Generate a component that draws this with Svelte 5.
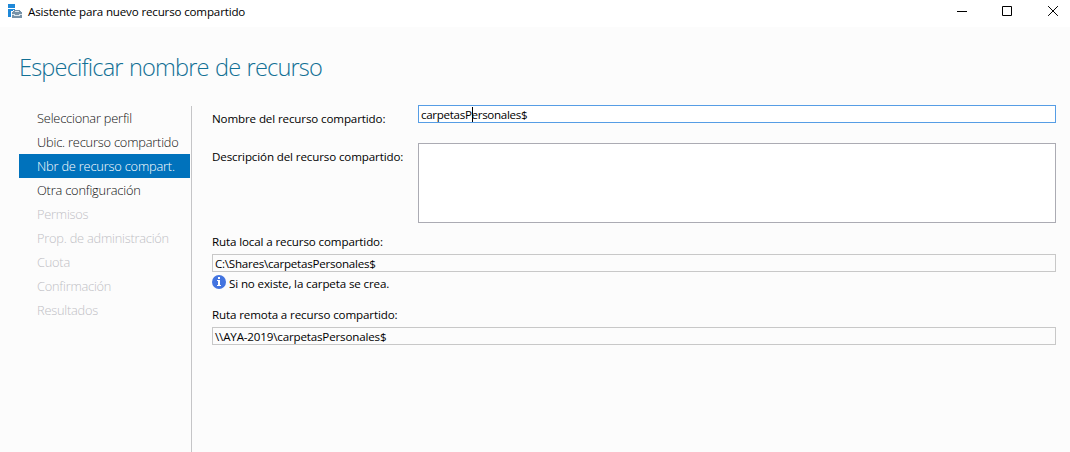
<script>
  const steps = [
    { text: 'Seleccionar perfil', state: '' },
    { text: 'Ubic. recurso compartido', state: '' },
    { text: 'Nbr de recurso compart.', state: 'active' },
    { text: 'Otra configuración', state: '' },
    { text: 'Permisos', state: 'disabled' },
    { text: 'Prop. de administración', state: 'disabled' },
    { text: 'Cuota', state: 'disabled' },
    { text: 'Confirmación', state: 'disabled' },
    { text: 'Resultados', state: 'disabled' }
  ];
</script>

<div class="window">
  <header class="titlebar">
    <svg class="app-icon" width="14" height="14" viewBox="0 0 14 14" shape-rendering="crispEdges">
      <path d="M0 0h7v4H0z M0 5h7v1H5v1H3v6H0z" fill="#1e88d8" />
      <path d="M6 6h6v1h1v1h1v6H4V8h1V7h1z" fill="#7893a8" />
      <path d="M7 7h4v1H7z M4 10h3v1h4v-1h3v1h-2v1H6v-1H4z" fill="#dce6ec" />
    </svg>
    <span class="title">Asistente para nuevo recurso compartido</span>
    <div class="controls">
      <svg width="10" height="11" viewBox="0 0 10 11"><path d="M0 5.5h10" stroke="#000" /></svg>
      <svg width="10" height="11" viewBox="0 0 10 11"><path d="M.5 .5h9v9h-9z" fill="none" stroke="#000" /></svg>
      <svg width="10" height="11" viewBox="0 0 10 11"><path d="M.1 .1l9.8 9.8M9.9 .1L.1 9.9" stroke="#000" /></svg>
    </div>
  </header>

  <h1>Especificar nombre de recurso</h1>

  <div class="content">
    <nav>
      {#each steps as step}
        <div class="step {step.state}">{step.text}</div>
      {/each}
    </nav>
    <main>
      <div class="row name-row">
        <span class="label">Nombre del recurso compartido:</span>
        <div class="field focused"><span>carpetasP</span><i class="caret"></i><span>ersonales$</span></div>
      </div>
      <div class="row desc-row">
        <span class="label">Descripción del recurso compartido:</span>
        <div class="field area"></div>
      </div>
      <div class="label above">Ruta local a recurso compartido:</div>
      <div class="field local-path">C:\Shares\carpetasPersonales$</div>
      <div class="info">
        <svg width="14" height="14" viewBox="0 0 14 14">
          <circle cx="7" cy="7" r="7" fill="#4374e0" />
          <path d="M6 2h2v2H6z M5 5h3v5h1v1H5v-1h1V6H5z" fill="#fff" />
        </svg>
        <span>Si no existe, la carpeta se crea.</span>
      </div>
      <div class="label above">Ruta remota a recurso compartido:</div>
      <div class="field remote-path">\\AYA-2019\carpetasPersonales$</div>
    </main>
  </div>
</div>

<style>
  :global(body) { margin: 0; background: #fcfcfc; }
  .window {
    width: 1070px; height: 452px; overflow: hidden; background: #fcfcfc;
    display: flex; flex-direction: column;
    font: 11.6px/16px "Open Sans", "Noto Sans", sans-serif;
    color: #000; white-space: nowrap;
  }
  .titlebar {
    box-sizing: border-box; height: 27px; flex: none; background: #fff;
    display: flex; align-items: flex-start; padding: 4px 12px 0 8px;
  }
  .app-icon { flex: none; }
  .title { margin-left: 6px; letter-spacing: -0.17px; }
  .controls { margin-left: auto; display: flex; gap: 35.5px; padding-top: 2px; }
  .controls svg { display: block; }
  .controls svg:first-child { margin-right: -0.5px; }
  .controls svg:nth-child(2) { margin-right: 0.5px; }
  h1 {
    margin: 22px 0 0 19px; height: 36px; flex: none;
    font-size: 23.6px; line-height: 36px; font-weight: 300; color: #127095;
    letter-spacing: -0.84px; word-spacing: 1px;
  }
  .content { flex: 1; display: flex; padding: 21px 14px 0 19px; }
  nav { width: 172px; height: 346px; flex: none; border-right: 1px solid #c5c5c7; }
  .step {
    box-sizing: border-box; width: 171px; height: 24px; padding-left: 18px;
    font-size: 12.8px; line-height: 24px; font-weight: 300; color: #111;
    letter-spacing: -0.19px;
  }
  .active { background: #0072bc; color: #fff; }
  .disabled { color: #c0c0c5; letter-spacing: -0.22px; }
  main { flex: 1; padding-left: 20px; display: flex; flex-direction: column; }
  .row { display: flex; }
  .name-row { height: 37px; }
  .desc-row { height: 91px; }
  .row .label { width: 206px; flex: none; padding-top: 5px; }
  .desc-row .label { padding-top: 6px; }
  .row .field { flex: 1; }
  .label { height: 16px; letter-spacing: -0.13px; }
  .field {
    box-sizing: border-box; height: 18px; border: 1px solid #c8c8c8;
    line-height: 18px; padding-left: 2px;
  }
  .focused { background: #fff; border-color: #569de5; display: flex; margin-top: -1px; letter-spacing: -0.32px; }
  .caret { width: 1px; height: 15px; margin: 1px -1px 0 0; background: #000; }
  .area { height: 80px; background: #fff; border-color: #ababb3; }
  .local-path { letter-spacing: -0.25px; }
  .remote-path { letter-spacing: -0.17px; }
  .info { display: flex; height: 32px; margin-top: 3px; gap: 3px; letter-spacing: -0.14px; }
  .info span { padding-top: 1px; }
  .info svg { flex: none; }
  .above { margin-bottom: 4px; }
</style>
